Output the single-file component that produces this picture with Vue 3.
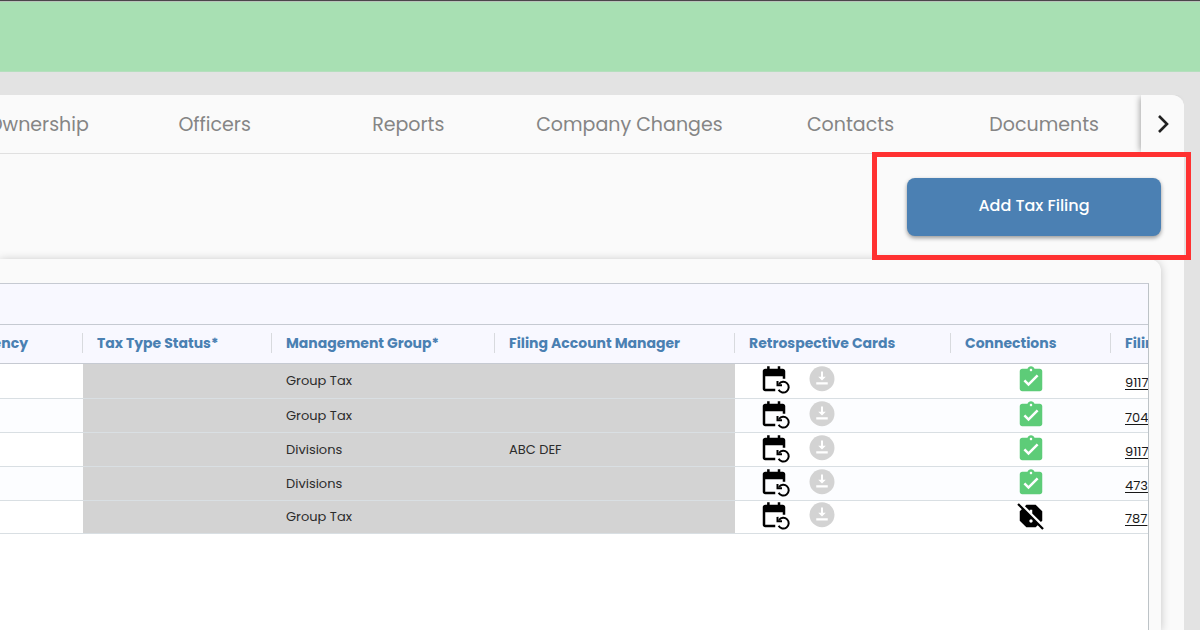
<script setup>
import { ref } from 'vue';

const tabs = ref(['Ownership', 'Officers', 'Reports', 'Company Changes', 'Contacts', 'Documents']);

const filings = ref([
    { group: 'Group Tax', manager: '', connected: true, number: '9117' },
    { group: 'Group Tax', manager: '', connected: true, number: '704' },
    { group: 'Divisions', manager: 'ABC DEF', connected: true, number: '9117' },
    { group: 'Divisions', manager: '', connected: true, number: '473' },
    { group: 'Group Tax', manager: '', connected: false, number: '787' },
]);
</script>

<template>
    <div class="page">
        <header class="banner"></header>

        <main class="panel">
            <nav class="tab-bar">
                <div class="tabs">
                    <a v-for="tab in tabs" :key="tab" href="#" class="tab">{{ tab }}</a>
                </div>
                <button type="button" class="pager" aria-label="Next tabs">
                    <svg width="12" height="20" viewBox="0 0 12 20">
                        <path d="M2 2l8 8-8 8" fill="none" stroke="#212121" stroke-width="2.6" />
                    </svg>
                </button>
            </nav>

            <div class="toolbar">
                <div class="highlight">
                    <button type="button" class="add-button">Add Tax Filing</button>
                </div>
            </div>

            <section class="card">
                <div class="grid">
                    <div class="group-header"></div>
                    <table class="filings">
                        <colgroup>
                            <col class="col-frequency" />
                            <col class="col-status" />
                            <col class="col-group" />
                            <col class="col-manager" />
                            <col class="col-cards" />
                            <col class="col-connections" />
                            <col />
                        </colgroup>
                        <thead>
                            <tr>
                                <th><div class="head cut-left">Frequency</div></th>
                                <th><div class="head">Tax Type Status*</div></th>
                                <th><div class="head">Management Group*</div></th>
                                <th><div class="head">Filing Account Manager</div></th>
                                <th><div class="head">Retrospective Cards</div></th>
                                <th><div class="head">Connections</div></th>
                                <th><div class="head">Filing</div></th>
                            </tr>
                        </thead>
                        <tbody>
                            <tr v-for="(filing, index) in filings" :key="index">
                                <td></td>
                                <td class="locked"></td>
                                <td class="locked">{{ filing.group }}</td>
                                <td class="locked">{{ filing.manager }}</td>
                                <td class="icon-cell">
                                    <div class="card-actions">
                                        <button type="button" class="icon-button" aria-label="Restore card">
                                            <svg viewBox="0 0 24 24">
                                                <path d="M17.6 3H17V1h-2v2H8.5V1h-2v2H5c-1.1 0-2 .9-2 2v14c0 1.1.9 2 2 2h8v-2H5V9h14v2h2V5c0-1.1-.9-2-2-2z" />
                                                <path d="M16 15.2a4.3 4.3 0 1 1-.3 4.6" fill="none" stroke="#000" stroke-width="1.6" />
                                                <path d="M14 12.7v4.2h4.4v-1.6h-2.8v-2.6z" />
                                            </svg>
                                        </button>
                                        <button type="button" class="icon-button" aria-label="Download card" disabled>
                                            <svg viewBox="0 1 24 24">
                                                <circle cx="12" cy="12" r="10" fill="#d3d3d3" />
                                                <path d="M11.2 6.2h1.6v4.2H15l-3 3-3-3h2.2zM7.4 14.7h9.2v1.8H7.4z" fill="#fff" />
                                            </svg>
                                        </button>
                                    </div>
                                </td>
                                <td class="icon-cell">
                                    <div class="connection">
                                        <svg v-if="filing.connected" viewBox="0 0 24 24" fill="#5dcc78">
                                            <path d="M19 3h-4.18C14.4 1.84 13.3 1 12 1c-1.3 0-2.4.84-2.82 2H5c-1.1 0-2 .9-2 2v14c0 1.1.9 2 2 2h14c1.1 0 2-.9 2-2V5c0-1.1-.9-2-2-2zm-7 0c.55 0 1 .45 1 1s-.45 1-1 1-1-.45-1-1 .45-1 1-1zm-2 14l-4-4 1.41-1.41L10 14.17l6.59-6.59L18 9l-8 8z" />
                                        </svg>
                                        <svg v-else viewBox="0 0 24 24">
                                            <path d="M11 7h2v2.92l6.91 6.91 1.09-1.1V8.27L15.73 3H8.27L7.18 4.1 11 7.92zM22.27 21.73l-20-20.01L1 2.99l3.64 3.64L3 8.27v7.46L8.27 21h7.46l1.64-1.63L21 23zM12 17.3c-.72 0-1.3-.58-1.3-1.3s.58-1.3 1.3-1.3 1.3.58 1.3 1.3-.58 1.3-1.3 1.3z" />
                                        </svg>
                                    </div>
                                </td>
                                <td class="link-cell"><a href="#" class="filing-link">{{ filing.number }}</a></td>
                            </tr>
                        </tbody>
                    </table>
                </div>
            </section>
        </main>
    </div>
</template>

<style>
body {
    background-color: #e3e3e3;
}
</style>

<style scoped>
.page {
    display: flex;
    flex-direction: column;
    min-height: 100vh;
    overflow: hidden;
    box-sizing: border-box;
    background-color: #e3e3e3;
    font-family: Poppins, Inter, sans-serif;
}

.banner {
    height: 70px;
    border-top: 1px solid #4b464a;
    border-bottom: 1px solid #b5dfbe;
    box-sizing: content-box;
    background-color: #a8e0b3;
    box-shadow: inset 0 1px #b9c4bb;
}

.panel {
    display: flex;
    flex: 1;
    flex-direction: column;
    margin: 23px 16px 0 0;
    border-top-right-radius: 12px;
    background-color: #fafafa;
}

/* Tabs */
.tab-bar {
    display: flex;
    height: 58px;
    border-bottom: 1px solid #e0e0e0;
}

.tabs {
    display: grid;
    flex: 1;
    grid-template-columns: 118fr 194fr 194fr 249fr 194fr 194fr;
    min-width: 0;
    overflow: hidden;
}

.tab {
    display: flex;
    align-items: center;
    justify-content: center;
    min-width: 0;
    padding-top: 2px;
    color: #858585;
    font-size: 19px;
    line-height: 30px;
    text-decoration: none;
    white-space: nowrap;
}

.tab:first-child {
    justify-content: flex-end;
    padding-right: 29px;
}

.pager {
    display: flex;
    align-items: center;
    justify-content: center;
    width: 43px;
    padding: 0;
    border: none;
    border-top-right-radius: 12px;
    background-color: #fafafa;
    box-shadow: -3px 0 6px -2px rgba(0, 0, 0, 0.35);
    clip-path: inset(0 0 0 -12px);
    cursor: pointer;
}

/* Toolbar */
.toolbar {
    display: flex;
    justify-content: flex-end;
    padding: 24px 23px 23px 0;
}

.highlight {
    position: relative;
}

.highlight::after {
    content: '';
    position: absolute;
    z-index: 1;
    inset: -26px -30px -24px -35px;
    border: 5px solid #ff3131;
    pointer-events: none;
}

.add-button {
    display: block;
    width: 254px;
    height: 58px;
    padding: 0 0 3px;
    border: none;
    border-radius: 8px;
    background-color: #4b80b3;
    box-shadow: 0 2px 4px rgba(0, 0, 0, 0.4);
    color: #fff;
    font-family: inherit;
    font-size: 16px;
    font-weight: 500;
    cursor: pointer;
}

/* Grid */
.card {
    display: flex;
    flex: 1;
    margin-right: 23px;
    padding: 24px 12px 0 0;
    border-top-right-radius: 12px;
    background-color: #fafafa;
    box-shadow: 0 1px 10px rgba(0, 0, 0, 0.22);
}

.grid {
    flex: 1;
    min-width: 0;
    border-top: 1px solid #c6cad2;
    border-right: 1px solid #bdc3c7;
    background-color: #fff;
}

.group-header {
    height: 41px;
    border-bottom: 1px solid #c6cad2;
    box-sizing: border-box;
    background-color: #f8f8ff;
}

.filings {
    width: 100%;
    border-collapse: separate;
    border-spacing: 0;
    table-layout: fixed;
}

.col-frequency {
    width: 83px;
}

.col-status {
    width: 189px;
}

.col-group {
    width: 223px;
}

.col-manager {
    width: 240px;
}

.col-cards {
    width: 216px;
}

.col-connections {
    width: 160px;
}

th {
    height: 39px;
    padding: 0 0 2px;
    border-bottom: 1px solid #c6cad2;
    box-sizing: border-box;
    overflow: hidden;
    background-color: #f8f8ff;
}

.head {
    display: flex;
    height: 20px;
    padding: 0 14px;
    border-right: 1px solid #d8dade;
    color: #4a80b2;
    font-size: 14px;
    font-weight: 700;
    line-height: 20px;
    white-space: nowrap;
}

th:last-child .head {
    border-right: none;
}

.head.cut-left {
    justify-content: flex-end;
    padding-right: 54px;
}

td {
    height: 34px;
    padding: 0 14px;
    border-bottom: 1px solid #d9dfe3;
    box-sizing: border-box;
    overflow: hidden;
    color: #2c2c2c;
    font-size: 13px;
    line-height: 20px;
    white-space: nowrap;
}

tbody tr:first-child td {
    height: 35px;
}

tbody tr:last-child td {
    height: 33px;
}

tbody tr:nth-child(even) td {
    background-color: #fcfdff;
}

tbody tr td.locked {
    background-color: #d3d3d3;
}

.icon-cell {
    padding-bottom: 2px;
}

.link-cell {
    padding-top: 4px;
}

.card-actions {
    display: flex;
    gap: 18px;
    padding-left: 10px;
}

.icon-button {
    padding: 0;
    border: none;
    background: none;
}

.icon-button svg,
.connection svg {
    display: block;
    width: 30px;
    height: 30px;
    overflow: visible;
}

.connection {
    display: flex;
    justify-content: center;
}

.filing-link {
    color: #181818;
    text-underline-offset: 2px;
}
</style>
